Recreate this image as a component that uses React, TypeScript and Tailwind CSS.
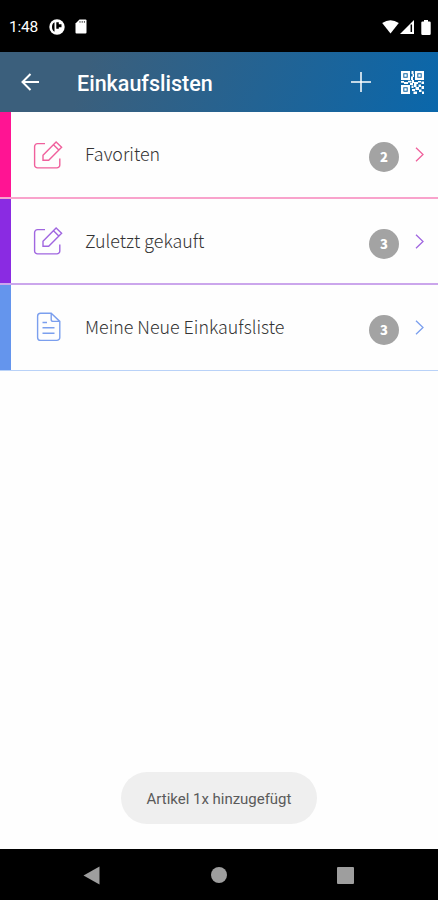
import clsx from "clsx";
import { FC } from "react";

interface ShoppingList {
  name: string;
  count: number;
  icon: "edit" | "file";
  bar: string;
  border: string;
  color: string;
}

const lists: ShoppingList[] = [
  {
    name: "Favoriten",
    count: 2,
    icon: "edit",
    bar: "bg-[#ff1493]",
    border: "bg-[#f9a3cc]",
    color: "text-[#f0609c]",
  },
  {
    name: "Zuletzt gekauft",
    count: 3,
    icon: "edit",
    bar: "bg-[#8a2be2]",
    border: "bg-[#cba6ec]",
    color: "text-[#a066e0]",
  },
  {
    name: "Meine Neue Einkaufsliste",
    count: 3,
    icon: "file",
    bar: "bg-[#6495ed]",
    border: "bg-[#b9d2f8]",
    color: "text-[#7b9fee]",
  },
];

const EditIcon: FC = () => (
  <svg width="30" height="30" viewBox="0 0 30 30" fill="none" stroke="currentColor" strokeWidth="1.4">
    <path d="M12 3.6H4.6a3 3 0 0 0-3 3v18.3a3 3 0 0 0 3 3h19.2a3 3 0 0 0 3-3V18.5" />
    <path d="m10 15.2 13.1-13.1 5.5 5.2-12.9 12.9H10zM20.5 4.8l5.3 5.3" />
  </svg>
);

const FileIcon: FC = () => (
  <svg width="30" height="30" viewBox="0 0 30 30" fill="none" stroke="currentColor" strokeWidth="1.4">
    <path d="M18.2 1.2H7.6a3 3 0 0 0-3 3v21.2a3 3 0 0 0 3 3h16.2a3 3 0 0 0 3-3V9.4zM18.2 1.2v6.2a2 2 0 0 0 2 2h6.6" />
    <path d="M9.5 10.5h4.5M9.5 15.8h12M9.5 21.2h12" />
  </svg>
);

const QrIcon: FC = () => (
  <svg width="23" height="23" viewBox="0 0 23 23" fill="currentColor">
    {/* finder squares */}
    <path fillRule="evenodd" d="M0 0h9v9H0zM2.3 2.3v4.4h4.4V2.3zM14 0h9v9h-9zM16.3 2.3v4.4h4.4V2.3zM0 14h9v9H0zM2.3 16.3v4.4h4.4v-4.4z" />
    <path d="M3.3 3.3h2.4v2.4H3.3zM17.3 3.3h2.4v2.4h-2.4zM3.3 17.3h2.4v2.4H3.3z" />
    {/* modules */}
    <path d="M10.5 0h2v3h-2zM11.5 3H13v3h-1.5zM10 5.5h2V9h-2zM0 10h3v1.8H0zM3 11h4v2H3zM7 9.8h3.5v1.700H7zM11 9h2v3h-2zM9 12h3v2H9zM13 11h4v2h-4zM17 10h3v1.500h-3zM20.500 10.500H23v2.500h-2.500zM10.500 14.500h2v2.500h-2zM13 13h2.500v3H13zM17.500 13.500H20V16h-2.500zM20.500 15H23v3h-2.500zM11 18h3v2h-3zM14.500 16h3.500v3h-3.500zM18 18.500h2.500V21H18zM12.500 20.500H16V23h-3.500zM21 20.500h2V23h-2z" />
  </svg>
);

const StatusBar: FC = () => (
  <div className="flex h-[52px] items-center bg-black pl-[9px] pr-[7px] pt-0.5 text-white">
    <span className="mt-0.5 w-[40px] text-[15.5px] tracking-[-0.2px]">1:48</span>
    <svg className="-mt-px" width="16" height="16" viewBox="0 0 16 16">
      <circle cx="8" cy="8" r="7.7" fill="#fff" />
      <path d="M5.500 3.300C3.800 4 3 5.900 3 8s.8 4 2.500 4.700zM7.300 3.300h2.500v2h2.700v3H9.800v1.500H7.300z" />
    </svg>
    <svg className="-mt-px ml-[10px]" width="12" height="15" viewBox="0 0 12 15">
      <path d="M4.5.5h6a1 1 0 0 1 1 1v12a1 1 0 0 1-1 1h-9a1 1 0 0 1-1-1v-9z" fill="#fff" />
      <path d="M5 2v1.800M7.2 2v1.800M9.4 2v1.800" stroke="#000" strokeWidth=".7" />
    </svg>
    <svg className="ml-auto" width="17" height="14" viewBox="0 0 17 14" fill="#fff">
      <path d="M.2 3.1Q8.5-2.5 16.8 3.1L8.5 13.6z" />
    </svg>
    <svg className="ml-px" width="14" height="14" viewBox="0 0 14 14">
      <path d="M0 14 14 0v14z" fill="#fff" />
      <path d="M11.3 4.5V12" stroke="#000" strokeWidth="1.5" />
    </svg>
    <svg className="ml-[7px]" width="10" height="15" viewBox="0 0 10 15" fill="#fff">
      <path d="M3 0h4v1.4h1.5a1.2 1.2 0 0 1 1.2 1.2v11.2A1.2 1.2 0 0 1 8.5 15h-7A1.2 1.2 0 0 1 .3 13.8V2.6a1.2 1.2 0 0 1 1.2-1.2H3z" />
    </svg>
  </div>
);

const Header: FC = () => (
  <header className="flex h-[60px] items-center bg-linear-[110deg] from-[#3b5f7c] from-20% to-[#0a67ab] to-100% pl-[21px] pr-[14px] text-white">
    <svg width="18" height="18" viewBox="0 0 18 18" fill="none" stroke="currentColor" strokeWidth="2">
      <path d="M18 9H1.5M9.5 1 1.5 9l8 8" />
    </svg>
    <h1 className="ml-[38px] mt-1 text-[21.5px] font-medium">Einkaufslisten</h1>
    <svg className="ml-auto" width="20" height="20" viewBox="0 0 20 20" stroke="currentColor" strokeWidth="1.5">
      <path d="M10 0v20M0 10h20" />
    </svg>
    <div className="ml-[30px] mt-px">
      <QrIcon />
    </div>
  </header>
);

const ListRow: FC<{ list: ShoppingList }> = ({ list }) => (
  <li className="flex h-[86.3px] flex-col">
    <div className="flex flex-1 items-stretch">
      <div className={clsx("w-[11px]", list.bar)} />
      <div className="flex flex-1 items-center pl-[22px] pr-[14px]">
        <div className={list.color}>{list.icon === "edit" ? <EditIcon /> : <FileIcon />}</div>
        <span className="-mt-px ml-[22px] font-['Noto_Sans_CJK_SC',sans-serif] text-[17.85px] font-light leading-none text-[#333]">
          {list.name}
        </span>
        <span className="ml-auto mt-[5px] flex size-[30px] items-center justify-center rounded-full bg-[#a3a3a3] pb-px font-['Noto_Sans_CJK_SC',sans-serif] text-[13px] font-black leading-none text-white">
          {list.count}
        </span>
        <svg
          className={clsx("ml-[16px]", list.color)}
          width="9"
          height="15"
          viewBox="0 0 9 15"
          fill="none"
          stroke="currentColor"
          strokeWidth="1.3"
        >
          <path d="m1 .7 7 6.8-7 6.8" />
        </svg>
      </div>
    </div>
    <div className={clsx("h-[1.5px]", list.border)} />
  </li>
);

const NavBar: FC = () => (
  <nav className="flex h-[51px] items-center justify-between bg-black pl-[83px] pr-[84px] pt-px text-[#9e9e9e]">
    <svg width="17" height="19" viewBox="0 0 17 19" fill="currentColor">
      <path d="M.5 9.5 16.5.5v18z" />
    </svg>
    <div className="size-4 rounded-full bg-current" />
    <div className="size-[17px] rounded-[1px] bg-current" />
  </nav>
);

const App: FC = () => {
  return (
    <div className="flex h-screen flex-col bg-[#fefefe] font-[Roboto,sans-serif]">
      <StatusBar />
      <Header />
      <ul className="pt-[0.4px]">
        {lists.map((list) => (
          <ListRow key={list.name} list={list} />
        ))}
      </ul>
      {/* toast */}
      <div className="mx-auto mb-[25px] mt-auto flex h-[52px] w-[196px] items-center justify-center rounded-[26px] bg-[#efefef] pt-0.5 text-[15px] tracking-[-0.02px] text-[#5a5a5a]">
        Artikel 1x hinzugefügt
      </div>
      <NavBar />
    </div>
  );
};

export default App;
